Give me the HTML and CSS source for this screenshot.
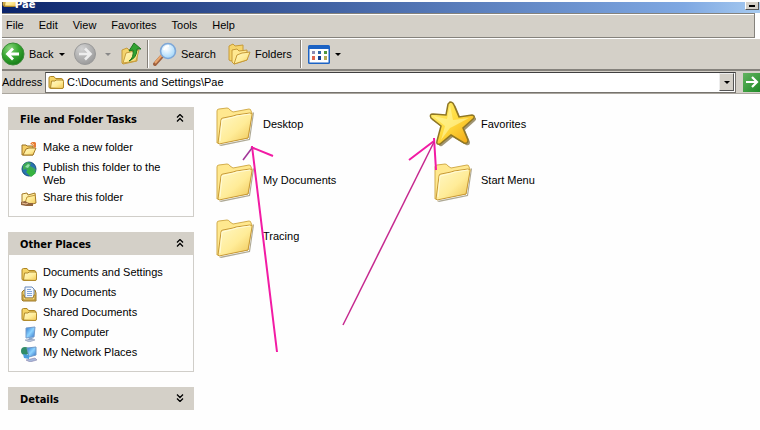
FILE: index.html
```html
<!DOCTYPE html>
<html lang="en">
<head>
<meta charset="utf-8">
<title>Pae</title>
<link rel="stylesheet" href="styles.css">
</head>
<body>
<svg class="defs" aria-hidden="true">
  <defs>
    <linearGradient id="gold" x1="0" y1="0" x2="1" y2="1"><stop offset="0" stop-color="#fff8c8"/><stop offset=".55" stop-color="#ffec98"/><stop offset="1" stop-color="#efc452"/></linearGradient>
    <linearGradient id="starfill" x1="0" y1="0" x2="1" y2="1"><stop offset="0" stop-color="#fff27c"/><stop offset=".5" stop-color="#ffda3c"/><stop offset="1" stop-color="#ef9f10"/></linearGradient>
    <radialGradient id="green" cx=".35" cy=".25" r=".8"><stop offset="0" stop-color="#8bd67c"/><stop offset=".5" stop-color="#38a832"/><stop offset="1" stop-color="#147a16"/></radialGradient>
    <radialGradient id="grey" cx=".35" cy=".25" r=".8"><stop offset="0" stop-color="#d2d2d2"/><stop offset="1" stop-color="#999"/></radialGradient>
    <radialGradient id="lens" cx=".4" cy=".35" r=".7"><stop offset="0" stop-color="#fff"/><stop offset="1" stop-color="#9cd4fa"/></radialGradient>
    <linearGradient id="screen" x1="0" y1="0" x2="1" y2="1"><stop offset="0" stop-color="#2c78d0"/><stop offset=".5" stop-color="#8ed4ff"/><stop offset="1" stop-color="#2d6cc4"/></linearGradient>
    <symbol id="big-folder" viewBox="0 0 48 48">
      <path d="M9 45l30-6 4-27 1 1-4 27-29 6z" fill="#8b8468" opacity=".7"/>
      <path d="M7 43V11q0-2 2-2l8-1q2 0 3 2l3 2 16-3q2 0 2 2l1 2-4 25-29 5z" fill="#ffe88f" stroke="#d3ad4c"/>
      <path d="M8 43l3-23q0-2 2-2l10-2 3-1 14-2q3 0 2 2l-4 23-29 6z" fill="url(#gold)" stroke="#c89a37"/>
      <path d="M10 41l2-21 12-3 3-1 13-2" fill="none" stroke="#fffbd8"/>
    </symbol>
    <symbol id="star" viewBox="0 0 48 48">
      <path d="M23 3q3 0 4 3l5 12 13-2q4 1 1 4l-10 9 5 12q0 4-4 3l-13-8-11 9q-4 1-3-3l4-15L3 19q-2-4 2-4l13 1 3-11z" fill="#77683b" opacity=".7" transform="translate(1 1)"/>
      <path d="M22 2q3 0 4 3l5 12 13-2q4 1 1 4l-10 9 5 12q0 4-4 3l-13-8-11 9q-4 1-3-3l4-15L3 18q-2-4 2-4l13 1 2-11z" fill="url(#starfill)" stroke="#8f7725" stroke-width="1.5"/>
      <path d="M22 5l3 15 16-2-15 8-4 2-9 12 4-14L5 16l14 3z" fill="#fff8a5" opacity=".6"/>
    </symbol>
    <symbol id="folder" viewBox="0 0 16 16">
      <path d="M1 13.500V4q0-1.500 1.500-1.500H6L7.500 4.500H13q2 0 2 2v7q0 1-1.500 1H2.500z" fill="#f5d466" stroke="#ad8422"/>
      <path d="M2.500 14l1-7H7l1-1h6q1.500 0 1.500 1.500V13q0 1.500-1.500 1.500z" fill="url(#gold)" stroke="#b18a2b"/>
    </symbol>
    <symbol id="open-folder" viewBox="0 0 16 16">
      <path d="M1 14V4h4l1 1h6v9z" fill="#f5ce67" stroke="#9a7225"/>
      <path d="M2 14l3-6 3-1h7l-3 7z" fill="url(#gold)" stroke="#a47927"/>
    </symbol>
    <symbol id="new-folder" viewBox="0 0 16 16"><use href="#open-folder"/><path d="M9 3l2-2h3l1 1v4l-2 1-1-3z" fill="#e77b36"/><path d="M11 2l2 2" stroke="#ffd08d"/></symbol>
    <symbol id="share" viewBox="0 0 16 16"><path d="M1 13V3l5-1 1 2 7-2 1 10-7 2z" fill="url(#gold)" stroke="#a47927"/><path d="M4 12l2-6 9-2" fill="none" stroke="#c1963a"/><path d="M0 11l4-1 4 2h4v3H5l-5-1z" fill="#91653f"/><path d="M1 12l4 1 2-1" fill="none" stroke="#efc399"/></symbol>
    <symbol id="globe" viewBox="0 0 16 16"><circle cx="8" cy="8" r="7" fill="#2873b0" stroke="#17517d"/><path d="M2 4l4-3 4 1-1 3 4 2 2 2-3 5-4-1-3-5-3 1z" fill="#3ea858"/><path d="M4 6l3-3 2 1-2 3z" fill="#97dfac"/><path d="M5 11l4-4 6 5-5 4z" fill="#36b340"/></symbol>
    <symbol id="docs" viewBox="0 0 16 16"><path d="M1 14V6l2-2h11l1 3v8H2z" fill="#eac968" stroke="#9d7828"/><path d="M4 12V1h7l2 2v9z" fill="#f3f8ff" stroke="#6a8abb"/><path d="M6 3.500h4M6 5.500h5M6 7.500h5M6 9.500h5" stroke="#82a5da"/><path d="M2 14V9h1l1 3h8l1-3h1v5z" fill="#f8dc82" stroke="#ab842a"/></symbol>
    <symbol id="computer" viewBox="0 0 16 16"><path d="M5 2l9-1-1 10-8 1z" fill="url(#screen)" stroke="#759bcb"/><path d="M8 12l3-1 1 3H7z" fill="#8badd4"/><path d="M4 14l8-1 2 1-6 2z" fill="#b9c5dc" stroke="#7989a9" stroke-width=".5"/></symbol>
    <symbol id="network" viewBox="0 0 16 16"><circle cx="4" cy="5" r="4" fill="#318c68"/><path d="M6 2l9-1v8l-7 2z" fill="url(#screen)" stroke="#709ac8"/><path d="M2 8l6 1v4l-5-1z" fill="#4c9ddd"/><path d="M5 14l9-2 2 2-7 2z" fill="#a7b8da" stroke="#7d74a0" stroke-width=".5"/></symbol>
    <symbol id="chevrons" viewBox="0 0 8 8"><path d="M1 3.500l3-3 3 3M1 7.500l3-3 3 3" fill="none" stroke="#000" stroke-width="1.300"/></symbol>
  </defs>
</svg>

<div class="window">
  <header class="titlebar">
    <svg class="icon" aria-hidden="true"><use href="#folder"/></svg>
    <h1 class="title">Pae</h1>
    <button class="minimize" aria-label="Minimize"></button>
  </header>

  <nav class="menubar" aria-label="Menu">
    <button>File</button><button>Edit</button><button>View</button><button>Favorites</button><button>Tools</button><button>Help</button>
  </nav>

  <div class="toolbar" role="toolbar" aria-label="Navigation">
    <button class="tool back">
      <svg class="tool-icon" viewBox="0 0 24 24" aria-hidden="true"><circle cx="12" cy="12" r="11" fill="url(#green)" stroke="#3b8c38"/><path d="M18 12H7M12 6.500L6.500 12l5.500 5.500" fill="none" stroke="#fff" stroke-width="2.800"/></svg>
      <span>Back</span><i class="caret"></i>
    </button>
    <button class="tool forward" aria-label="Forward" disabled>
      <svg class="tool-icon" viewBox="0 0 24 24" aria-hidden="true"><circle cx="12" cy="12" r="10.500" fill="url(#grey)" stroke="#999"/><path d="M6 12h11M12 6.500l5.500 5.500-5.500 5.500" fill="none" stroke="#eee" stroke-width="2.600"/></svg>
      <i class="caret"></i>
    </button>
    <button class="tool up" aria-label="Up">
      <svg class="tool-icon" viewBox="0 0 24 24" aria-hidden="true"><path d="M3 21V8l5-2 2 2 8-2v13l-14 3z" fill="#f4d36c" stroke="#c49a39"/><path d="M4 21l3-10 13-3-3 11z" fill="url(#gold)" stroke="#c79e3f"/><path d="M10 19q5-3 4-11l-4 1 5-8 7 6-4 0q0 9-8 12z" fill="#32a332" stroke="#1e751e"/></svg>
    </button>
    <span class="separator"></span>
    <button class="tool search">
      <svg class="tool-icon" viewBox="0 0 24 24" aria-hidden="true"><path d="M2 22l8-9" stroke="#9f603e" stroke-width="4" stroke-linecap="round"/><path d="M2 21l7-8" stroke="#e9a66d" stroke-width="2"/><circle cx="15" cy="9" r="7.500" fill="url(#lens)" stroke="#7ea7d7" stroke-width="1.600"/><path d="M11 8q1-4 5-4" fill="none" stroke="#fff" stroke-width="2"/></svg>
      <span>Search</span>
    </button>
    <button class="tool folders">
      <svg class="tool-icon" viewBox="0 0 24 24" aria-hidden="true"><path d="M2 18V4l4-2 2 2 8-1v11L4 19z" fill="#f6d56c" stroke="#c69a38"/><path d="M5 20V8l5-1 2 2 8-1v10L7 22z" fill="#ffe890" stroke="#c69a38"/><path d="M7 22l3-9 5-2 8-1-3 8z" fill="url(#gold)" stroke="#c69a38"/></svg>
      <span>Folders</span>
    </button>
    <span class="separator"></span>
    <button class="tool views" aria-label="Views">
      <svg class="tool-icon" viewBox="0 0 24 24" aria-hidden="true"><rect x="1" y="3" width="22" height="19" rx="1.500" fill="#1c63c4"/><path d="M2.500 7h19v13.500h-19z" fill="#fff"/><path d="M5 9h3v3H5z" fill="#8d8db5"/><path d="M11 9h3v3h-3z" fill="#3368a8"/><path d="M17 9h3v3h-3z" fill="#4e963d"/><path d="M5 14h3v4H5z" fill="#e0664f"/><path d="M11 14h3v4h-3z" fill="#183f91"/><path d="M17 14h3v4h-3z" fill="#b5ab55"/></svg>
      <i class="caret"></i>
    </button>
  </div>

  <form class="addressbar">
    <label for="address">Address</label>
    <div class="field">
      <svg class="icon" aria-hidden="true"><use href="#folder"/></svg>
      <input id="address" type="text" value="C:\Documents and Settings\Pae">
      <button type="button" class="drop" aria-label="Show addresses"><i class="caret"></i></button>
    </div>
    <button type="button" class="go" aria-label="Go"><svg viewBox="0 0 18 18" aria-hidden="true"><path d="M3 9h11M9 4l5 5-5 5" fill="none" stroke="#fff" stroke-width="2.200"/></svg></button>
  </form>

  <div class="content">
    <aside class="sidebar">
      <section class="panel">
        <h2><button>File and Folder Tasks<svg class="chevron" aria-hidden="true"><use href="#chevrons"/></svg></button></h2>
        <ul>
          <li><svg class="icon" aria-hidden="true"><use href="#new-folder"/></svg><a href="#">Make a new folder</a></li>
          <li><svg class="icon" aria-hidden="true"><use href="#globe"/></svg><a href="#">Publish this folder to the Web</a></li>
          <li><svg class="icon" aria-hidden="true"><use href="#share"/></svg><a href="#">Share this folder</a></li>
        </ul>
      </section>
      <section class="panel">
        <h2><button>Other Places<svg class="chevron" aria-hidden="true"><use href="#chevrons"/></svg></button></h2>
        <ul>
          <li><svg class="icon" aria-hidden="true"><use href="#folder"/></svg><a href="#">Documents and Settings</a></li>
          <li><svg class="icon" aria-hidden="true"><use href="#docs"/></svg><a href="#">My Documents</a></li>
          <li><svg class="icon" aria-hidden="true"><use href="#folder"/></svg><a href="#">Shared Documents</a></li>
          <li><svg class="icon" aria-hidden="true"><use href="#computer"/></svg><a href="#">My Computer</a></li>
          <li><svg class="icon" aria-hidden="true"><use href="#network"/></svg><a href="#">My Network Places</a></li>
        </ul>
      </section>
      <section class="panel">
        <h2><button>Details<svg class="chevron down" aria-hidden="true"><use href="#chevrons"/></svg></button></h2>
      </section>
    </aside>

    <main class="files">
      <a href="#"><svg aria-hidden="true"><use href="#big-folder"/></svg>Desktop</a>
      <a href="#"><svg aria-hidden="true"><use href="#star"/></svg>Favorites</a>
      <a href="#"><svg aria-hidden="true"><use href="#big-folder"/></svg>My Documents</a>
      <a href="#"><svg aria-hidden="true"><use href="#big-folder"/></svg>Start Menu</a>
      <a href="#"><svg aria-hidden="true"><use href="#big-folder"/></svg>Tracing</a>
    </main>
  </div>

  <svg class="annotations" viewBox="0 0 760 430" aria-hidden="true">
    <g fill="none" stroke="#f21ba4" stroke-width="2">
      <path d="M277 352L252 146M251 147l22 9"/>
      <path d="M243 160l9-12" stroke="#a23598" stroke-width="1.500"/>
      <path d="M409 160l25-19M434 138l2 32"/>
      <path d="M343 325L434 142" stroke="#c6288f" stroke-width="1.500"/>
    </g>
  </svg>
</div>
</body>
</html>
```

FILE: styles.css
```css
* { box-sizing: border-box; }

body {
  margin: 0;
  background: #fefefe;
  color: #000;
  font: 11px/13px "Liberation Sans", sans-serif;
}

button, input {
  margin: 0;
  padding: 0;
  border: 0;
  background: none;
  color: inherit;
  font: inherit;
}

a { color: inherit; text-decoration: none; }
svg { display: block; flex: none; }
.defs { position: absolute; width: 0; height: 0; }
.icon { width: 16px; height: 16px; }

.window {
  position: relative;
  min-height: 100vh;
  padding: 2px 0 0 2px;
  overflow: hidden;
}

.titlebar {
  display: flex;
  align-items: flex-end;
  height: 11px;
  overflow: hidden;
  background: linear-gradient(90deg, #0b246b, #7fa8e2 90%, #a6caf0);
  color: #fff;
}
.titlebar .icon { margin: 0 -3px 5px 0; }
.title {
  flex: 1;
  margin: 0 0 2px;
  font: bold 11px/13px "DejaVu Sans Condensed", sans-serif;
}
.minimize {
  width: 14px;
  height: 16px;
  margin: 0 1px 3px 0;
  background: #d4d0c8;
  border: 1px solid #555;
  border-top: 0;
  border-left-color: #fff;
  display: flex;
  align-items: flex-end;
  justify-content: center;
}
.minimize::after { content: ""; width: 6px; height: 2px; margin-bottom: 2px; background: #000; }

.menubar {
  display: flex;
  gap: 15px;
  height: 25px;
  margin-right: 5px;
  padding-left: 4px;
  background: #d4d0c8;
  border: solid #85827c;
  border-width: 1px 1px 1px 0;
  box-shadow: inset 0 1px #fff;
}

.toolbar {
  display: flex;
  align-items: center;
  height: 33px;
  background: #d4d0c8;
  border-top: 1px solid #fff;
  border-bottom: 2px solid #85827c;
}
.tool { display: flex; align-items: center; gap: 4px; }
.tool-icon { width: 24px; height: 24px; }
.caret {
  border: solid transparent;
  border-width: 3px 3px 0;
  border-top-color: #000;
}
.back { width: 71px; }
.back .tool-icon { margin-left: -1px; }
.back .caret { margin-left: 2px; }
.forward { width: 46px; gap: 8px; }
.forward .caret { border-top-color: #888; }
.up { width: 28px; }
.separator { width: 2px; height: 28px; border-left: 1px solid #858079; border-right: 1px solid #fff; }
.search { width: 74px; margin-left: 4px; }
.folders { width: 73px; }
.views { margin-left: 5px; }

.addressbar {
  display: flex;
  align-items: center;
  gap: 5px;
  height: 23px;
  background: #d4d0c8;
  border-bottom: 1px solid #aaa69e;
}
.addressbar label { width: 38px; white-space: nowrap; }
.field {
  display: flex;
  align-items: center;
  flex: 1;
  gap: 3px;
  height: 21px;
  padding: 0 1px 0 2px;
  background: #fff;
  border: 1px solid #76736e;
  border-top-color: #404040;
}
.field input { flex: 1; min-width: 0; outline: 0; }
.drop {
  display: flex;
  align-items: center;
  justify-content: center;
  width: 15px;
  height: 18px;
  background: #d4d0c8;
  border: 1px solid #555;
  border-top-color: #eee;
  border-left-color: #eee;
}
.go { width: 17px; height: 19px; margin-left: 2px; overflow: hidden; background: linear-gradient(135deg, #63b360, #1e8b27); }
.go svg { width: 18px; height: 18px; }

.content {
  display: grid;
  grid-template-columns: 186px 1fr;
  gap: 16px;
  padding: 6px 0 0 6px;
}

.sidebar { display: grid; align-content: start; gap: 15px; padding-top: 7px; }
.panel { border: solid #d0cec9; border-width: 0 1px 1px; }
.panel h2 { margin: 0 -1px; font: bold 11px/13px "DejaVu Sans Condensed", sans-serif; }
.panel h2 button {
  display: flex;
  align-items: center;
  justify-content: space-between;
  width: 100%;
  height: 23px;
  padding: 2px 10px 0 12px;
  background: #d4d0c8;
}
.panel:last-child { border: 0; }
.panel:last-child h2 { margin: 0; }
.chevron { width: 8px; height: 8px; margin-bottom: 3px; }
.down { transform: scaleY(-1); }
.panel ul {
  display: grid;
  gap: 4px;
  margin: 0;
  padding: 11px 12px 9px;
  list-style: none;
}
.panel li { display: flex; gap: 6px; }

.files {
  display: grid;
  grid-template-columns: repeat(auto-fill, 218px);
  grid-auto-rows: 56px;
}
.files a { display: flex; align-items: center; gap: 5px; height: 48px; }
.files svg { width: 48px; height: 48px; }

.annotations { position: absolute; top: 0; left: 0; width: 760px; height: 430px; pointer-events: none; }
```
